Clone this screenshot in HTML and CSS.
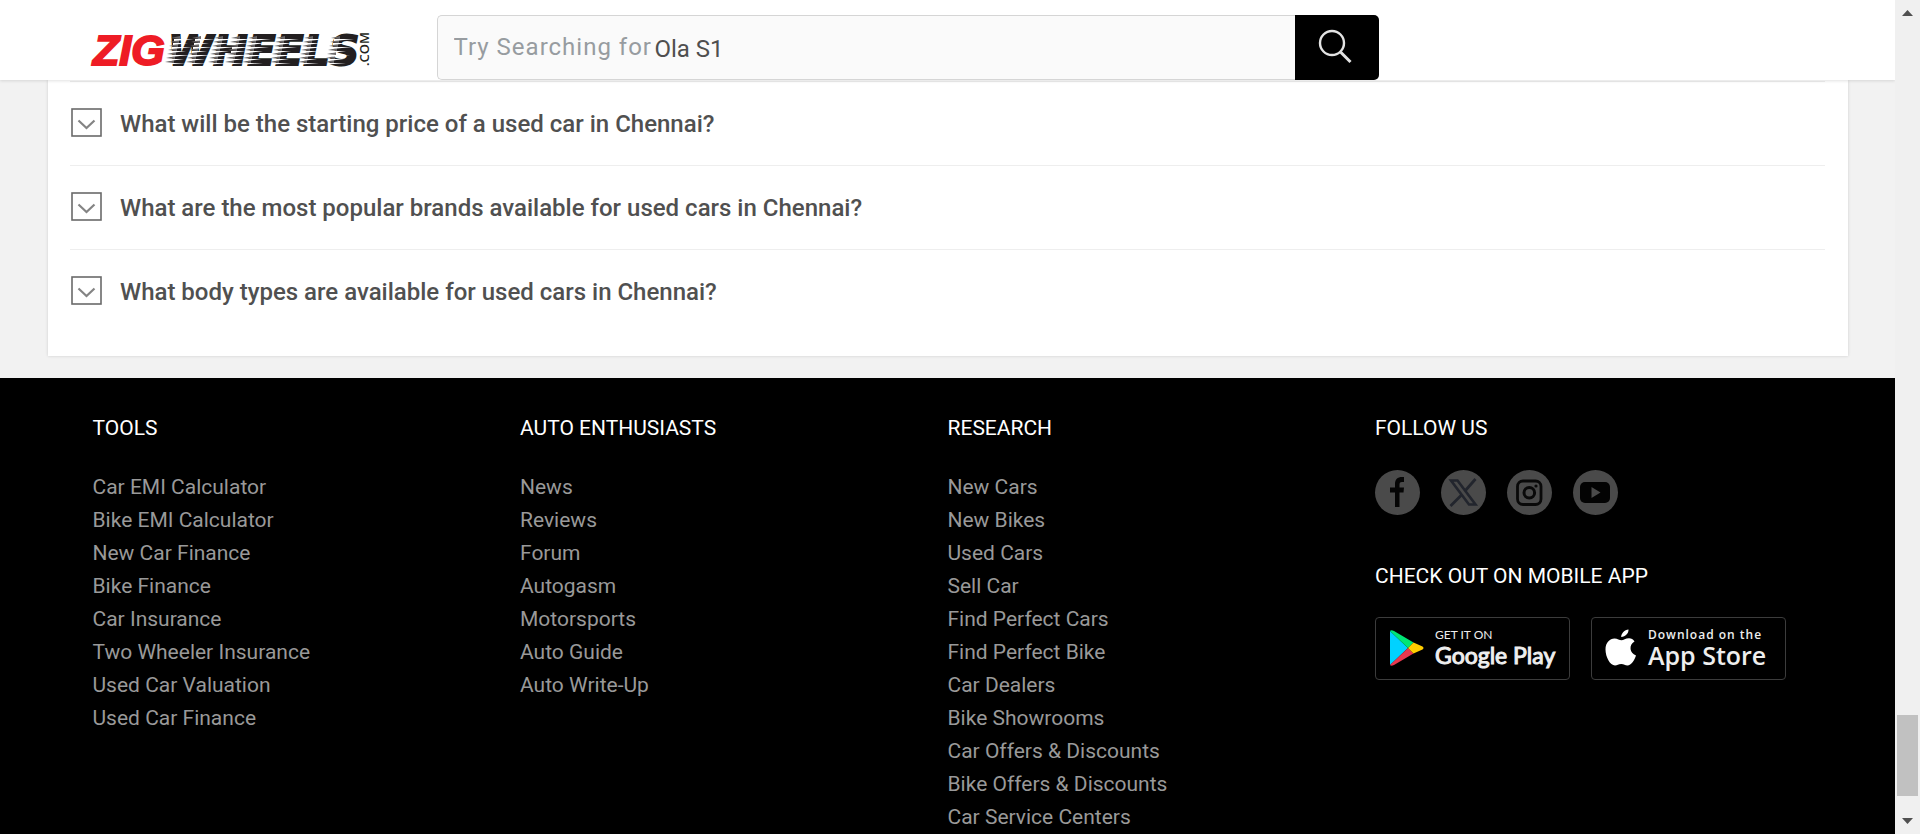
FILE: index.html
```html
<!DOCTYPE html>
<html lang="en">
<head>
<meta charset="utf-8">
<title>ZigWheels - Used cars in Chennai</title>
<link rel="stylesheet" href="styles.css">
</head>
<body>
<svg class="sprite" aria-hidden="true">
  <symbol id="chevron" viewBox="0 0 31 29">
    <rect x="1" y="1" width="29" height="27" fill="#fff" stroke="#6a6a6a" stroke-width="1.6"/>
    <path d="M7.5 12.500 L15.500 20 L23.500 12.500" fill="none" stroke="#848484" stroke-width="2.200"/>
  </symbol>
</svg>
<div class="page">
  <header class="header">
    <div class="header-inner">
      <a class="logo" href="#" aria-label="ZigWheels.com">
        <svg width="280" height="40" viewBox="0 0 280 40">
          <defs>
            <g id="streaks">
              <path fill="#6b6869" d="M2 8l9-2v3zM1 12l9-2v3zM0 16l9-2v3zM-1 20l9-2v3zM-2 24l9-2v3zM-3 28l9-2v3zM-4 32l9-2v3z"/>
              <path fill="#fff" d="M5 9h20l-20 2zM4 13h15l-15 2zM3 17h20l-20 2zM2 21h15l-15 2zM1 25h20l-20 2zM0 29h15l-15 2zM-1 33h18l-18 1.500z"/>
            </g>
          </defs>
          <g class="logo-text">
            <text x="75" y="35" fill="#231f20" stroke="#231f20" class="logo-wheels">WHEELS</text>
          </g>
          <use href="#streaks" x="76"/>
          <use href="#streaks" x="97"/>
          <use href="#streaks" x="119"/>
          <use href="#streaks" x="136"/>
          <use href="#streaks" x="153"/>
          <use href="#streaks" x="181"/>
          <use href="#streaks" x="209"/>
          <use href="#streaks" x="236"/>
          <g class="logo-text">
            <text x="0" y="35" fill="#ee1c25" stroke="#ee1c25" class="logo-zig">ZIG</text>
          </g>
          <text class="logo-com" x="-36" y="276" transform="rotate(-90)">.COM</text>
        </svg>
      </a>
      <form class="search">
        <div class="search-field">
          <input class="search-input" type="text" aria-label="Search" placeholder="Try Searching for">
          <span class="search-hint">Ola S1</span>
        </div>
        <button class="search-button" type="button" aria-label="Search">
          <svg width="34" height="36" viewBox="0 0 34 36" fill="none" stroke="#e3e3e3">
            <circle cx="14" cy="14" r="12" stroke-width="2.400"/>
            <path d="M22.500 23 L32.500 33" stroke-width="3"/>
          </svg>
        </button>
      </form>
    </div>
  </header>

  <main class="main">
    <section class="faq">
      <button class="question" type="button"><svg class="question-icon"><use href="#chevron"/></svg>What will be the starting price of a used car in Chennai?</button>
      <button class="question" type="button"><svg class="question-icon"><use href="#chevron"/></svg>What are the most popular brands available for used cars in Chennai?</button>
      <button class="question" type="button"><svg class="question-icon"><use href="#chevron"/></svg>What body types are available for used cars in Chennai?</button>
    </section>
  </main>

  <footer class="footer">
    <div class="footer-grid">
      <section>
        <h2 class="footer-title">TOOLS</h2>
        <ul class="links">
          <li><a href="#">Car EMI Calculator</a></li>
          <li><a href="#">Bike EMI Calculator</a></li>
          <li><a href="#">New Car Finance</a></li>
          <li><a href="#">Bike Finance</a></li>
          <li><a href="#">Car Insurance</a></li>
          <li><a href="#">Two Wheeler Insurance</a></li>
          <li><a href="#">Used Car Valuation</a></li>
          <li><a href="#">Used Car Finance</a></li>
        </ul>
      </section>
      <section>
        <h2 class="footer-title">AUTO ENTHUSIASTS</h2>
        <ul class="links">
          <li><a href="#">News</a></li>
          <li><a href="#">Reviews</a></li>
          <li><a href="#">Forum</a></li>
          <li><a href="#">Autogasm</a></li>
          <li><a href="#">Motorsports</a></li>
          <li><a href="#">Auto Guide</a></li>
          <li><a href="#">Auto Write-Up</a></li>
        </ul>
      </section>
      <section>
        <h2 class="footer-title">RESEARCH</h2>
        <ul class="links">
          <li><a href="#">New Cars</a></li>
          <li><a href="#">New Bikes</a></li>
          <li><a href="#">Used Cars</a></li>
          <li><a href="#">Sell Car</a></li>
          <li><a href="#">Find Perfect Cars</a></li>
          <li><a href="#">Find Perfect Bike</a></li>
          <li><a href="#">Car Dealers</a></li>
          <li><a href="#">Bike Showrooms</a></li>
          <li><a href="#">Car Offers &amp; Discounts</a></li>
          <li><a href="#">Bike Offers &amp; Discounts</a></li>
          <li><a href="#">Car Service Centers</a></li>
        </ul>
      </section>
      <section>
        <h2 class="footer-title">FOLLOW US</h2>
        <div class="social">
          <a href="#" aria-label="Facebook"><svg viewBox="0 0 45 45"><path d="M20 37V22.500h-5v-5h5v-3.500c0-4.500 2.500-7 7-7h2v5h-2c-1.800 0-2.500.8-2.500 2.500v3h4.500l-.5 5h-4V37z" fill="#050505"/></svg></a>
          <a href="#" aria-label="X"><svg viewBox="0 0 45 45"><path d="M10 10.500h6.500L34.500 34.500H28z" fill="none" stroke="#22252d" stroke-width="2.600"/><path d="M34.500 9 24 21M20.500 25 9.500 36" fill="none" stroke="#22252d" stroke-width="2.800"/></svg></a>
          <a href="#" aria-label="Instagram"><svg viewBox="0 0 45 45" fill="none" stroke="#090909"><rect x="10.500" y="11" width="23.500" height="23.500" rx="5.500" stroke-width="2.800"/><circle cx="22.300" cy="22.800" r="5.300" stroke-width="3"/><circle cx="29" cy="16" r="1.600" fill="#090909" stroke="none"/></svg></a>
          <a href="#" aria-label="YouTube"><svg viewBox="0 0 45 45"><rect x="7" y="12" width="30" height="21" rx="5" fill="#030303"/><path d="M18.500 17v11l9-5.500z" fill="#4a4a4a"/></svg></a>
        </div>
        <h2 class="footer-title">CHECK OUT ON MOBILE APP</h2>
        <div class="stores">
          <a class="store store-google" href="#">
            <svg width="34" height="36" viewBox="0 0 34 36">
              <path d="M0 1v34l18-17z" fill="#00d2ff"/>
              <path d="M0 1Q1-.5 4 1L23.500 12.500 18 18z" fill="#00e676"/>
              <path d="M0 35q1 1.500 4 0L23.500 23.500 18 18z" fill="#e8384f"/>
              <path d="M23.500 12.500 18 18l5.500 5.500L32.500 19.500q2-1.500 0-3z" fill="#ffcd00"/>
            </svg>
            <span class="store-text"><small>GET IT ON</small><strong>Google Play</strong></span>
          </a>
          <a class="store store-apple" href="#">
            <svg width="32" height="38" viewBox="0 0 32 38" fill="#fff">
              <path d="M23.500.500c.3 3.500-3.200 7.500-7.300 7.500-.3-3.500 3.500-7.300 7.300-7.500z"/>
              <path d="M29.500 12.500c-6 3.600-5 11.500 1.500 14-1.500 4.700-4.800 10-8.500 10-2.500 0-3.500-1.400-6.300-1.400s-4 1.400-6.200 1.400C5 36.500.5 28 .5 20.500c0-7 4.300-11 9-11 3 0 5 1.800 7 1.800s4-2 7.500-2c2.300 0 4.200 1.200 5.500 3.200z"/>
            </svg>
            <span class="store-text"><small>Download on the</small><strong>App Store</strong></span>
          </a>
        </div>
      </section>
    </div>
  </footer>
</div>
<aside class="scrollbar" aria-hidden="true">
  <svg width="11" height="6" viewBox="0 0 11 6"><path d="M0 6 5.500 0 11 6z" fill="#505050"/></svg>
  <div class="scroll-track"><div class="scroll-thumb"></div></div>
  <svg width="11" height="6" viewBox="0 0 11 6"><path d="M0 0 5.500 6 11 0z" fill="#505050"/></svg>
</aside>
</body>
</html>
```

FILE: styles.css
```css
* {
  box-sizing: border-box;
}

body {
  display: grid;
  grid-template-columns: minmax(0, 1fr) 25px;
  height: 100vh;
  margin: 0;
  overflow: hidden;
  font-family: Roboto, "Noto Sans", sans-serif;
  font-size: 21px;
}

a {
  color: inherit;
  text-decoration: none;
}

button {
  border: 0;
  font: inherit;
  cursor: pointer;
}

.sprite {
  display: none;
}

.page {
  display: flex;
  flex-direction: column;
  height: 100vh;
  overflow: hidden;
  background: #f2f2f2;
}

/* Header */

.header {
  z-index: 1;
  flex: none;
  padding-top: 15px;
  background: #fff;
  box-shadow: 0 1px 3px rgba(0, 0, 0, 0.12);
}

.header-inner,
.footer-grid {
  max-width: 1710px;
  margin: 0 auto;
}

.header-inner {
  display: flex;
  gap: 64px;
}

.logo {
  flex: none;
  padding-top: 15px;
}

.logo svg {
  display: block;
  overflow: visible;
}

.logo-text {
  font-style: italic;
  font-weight: 700;
}

.logo-zig {
  font-family: "Liberation Sans", sans-serif;
  font-size: 43px;
  stroke-width: 2px;
}

.logo-wheels {
  font-family: "DejaVu Sans", sans-serif;
  font-size: 41px;
  stroke-width: 2px;
}

.logo-com {
  font-family: "Open Sans", sans-serif;
  font-size: 13px;
  font-weight: 600;
  fill: #231f20;
}

.search {
  display: flex;
  flex: 0 1 942px;
  height: 65px;
}

.search-field {
  display: flex;
  flex: 1;
  align-items: center;
  padding-left: 16px;
  border: 1px solid #d5d5d5;
  border-right: 0;
  border-radius: 5px 0 0 5px;
  background: #fafafa;
  font-size: 24px;
}

.search-input {
  width: 201px;
  padding: 0 0 2px;
  border: 0;
  outline: 0;
  background: none;
  font: inherit;
  letter-spacing: 1px;
}

.search-input::placeholder {
  color: #979ca0;
}

.search-hint {
  padding-top: 2px;
  color: #4f4f4f;
}

.search-button {
  display: grid;
  place-items: center;
  width: 84px;
  padding: 0 4px 2px 0;
  border-radius: 0 5px 5px 0;
  background: #000;
}

/* Questions */

.main {
  flex: none;
  padding: 0 47px 22px 48px;
}

.faq {
  padding: 1px 23px 23px 22px;
  background: #fff;
  box-shadow: 0 0 3px rgba(0, 0, 0, 0.15);
}

.question {
  display: flex;
  gap: 18px;
  align-items: center;
  width: 100%;
  height: 84px;
  padding: 0 0 0 1px;
  border-top: 1px solid #eee;
  background: none;
  color: #505050;
  font-size: 24px;
  font-weight: 500;
  text-align: left;
}

.question-icon {
  flex: none;
  width: 31px;
  height: 29px;
  margin-bottom: 2px;
}

/* Footer */

.footer {
  flex: 1;
  padding-top: 35px;
  background: #000;
}

.footer-grid {
  display: grid;
  grid-template-columns: repeat(4, minmax(0, 1fr));
}

.footer-title {
  margin: 0 0 26px;
  color: #fff;
  font-size: 21px;
  font-weight: 400;
  line-height: 30px;
}

.links {
  margin: 0;
  padding: 2px 0 0;
  color: #999;
  line-height: 33px;
  list-style: none;
}

.social,
.stores {
  display: flex;
  gap: 21px;
}

.social {
  padding: 1px 0 46px;
}

.social a {
  width: 45px;
  height: 45px;
  border-radius: 50%;
  background: #4a4a4a;
}

.social svg {
  display: block;
}

.store {
  display: flex;
  gap: 11px;
  align-items: center;
  width: 195px;
  height: 63px;
  padding: 0 0 2px 14px;
  border: 1px solid #3c3c3c;
  border-radius: 4px;
  color: #eee;
}

.store svg {
  flex: none;
}

.store-text {
  display: flex;
  flex-direction: column;
  white-space: nowrap;
}

.store-text small {
  font-size: 12px;
  line-height: 14px;
}

.store-text strong {
  font-size: 25px;
  line-height: 26px;
}

.store-google {
  font-family: Lato, sans-serif;
}

.store-google .store-text strong {
  font-size: 23px;
  font-weight: 400;
  -webkit-text-stroke: 1px #eee;
}

.store-apple {
  padding-left: 13px;
  font-family: "Open Sans", sans-serif;
}

.store-apple small {
  font-weight: 600;
  letter-spacing: 1px;
}

.store-apple strong {
  font-weight: 600;
}

/* Scrollbar */

.scrollbar {
  display: flex;
  flex-direction: column;
  align-items: center;
  padding: 10px 2px;
  background: #f0f0f0;
}

.scrollbar svg {
  flex: none;
}

.scroll-track {
  display: flex;
  flex: 1;
  align-items: flex-end;
  width: 100%;
  padding-bottom: 22px;
}

.scroll-thumb {
  width: 100%;
  height: 81px;
  background: #c1c1c1;
}
```
